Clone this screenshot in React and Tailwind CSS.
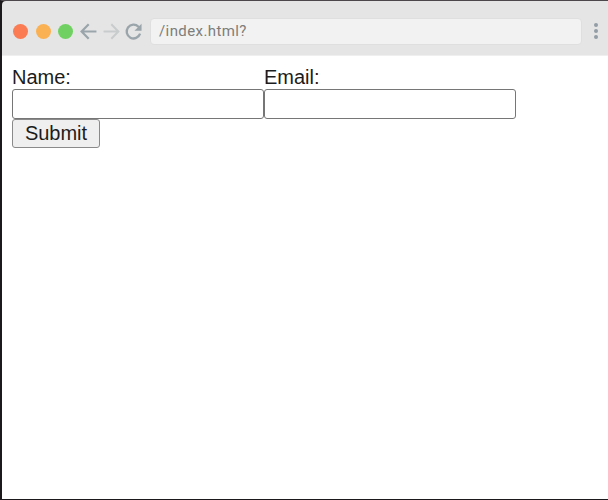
function NavIcon({ className, width, children }) {
  return (
    <svg viewBox="0 0 24 24" className={className} fill="none" stroke="currentColor" strokeWidth={width}>
      {children}
    </svg>
  );
}

function Toolbar() {
  return (
    <header className="flex h-[55px] shrink-0 items-center rounded-tl-[4px] border-b border-[#efefef] bg-[#e5e5e5] pt-[6px] pl-[11px]">
      <div className="flex shrink-0 gap-[7.5px]">
        <span className="size-[15px] rounded-full bg-[#fb7b53]" />
        <span className="size-[15px] rounded-full bg-[#fab153]" />
        <span className="size-[15px] rounded-full bg-[#70d162]" />
      </div>
      <nav className="ml-[4px] flex shrink-0 text-[#9aa5ab]">
        <NavIcon className="size-[23px]" width="2.3">
          <path d="M20.3 12H5.2M12.2 4.4 4.8 12l7.4 7.6" />
        </NavIcon>
        <NavIcon className="size-[23px] text-[#c8cccd]" width="2.1">
          <path d="M3.7 12h15.1M11.8 4.4l7.4 7.6-7.4 7.6" />
        </NavIcon>
        <NavIcon className="-ml-px size-[23px]" width="2.4">
          <path d="M18.9 14.3A7.2 7.2 0 1 1 17.2 7l1.4 1.5" />
          <path d="M20.4 3.8v7.4H13z" fill="currentColor" stroke="none" />
        </NavIcon>
      </nav>
      <div className="ml-[5px] flex h-[27px] w-[432px] shrink-0 items-center rounded-[4px] border border-[#dfdfdf] bg-[#f2f2f2] pl-[8px] font-[Roboto,sans-serif] text-[15px] tracking-[0.4px] text-[#7d7d7a]">
        /index.html?
      </div>
      <div className="ml-[12px] flex shrink-0 flex-col gap-[2px]">
        <span className="size-[4px] rounded-full bg-[#929da5]" />
        <span className="size-[4px] rounded-full bg-[#929da5]" />
        <span className="size-[4px] rounded-full bg-[#929da5]" />
      </div>
    </header>
  );
}

function Field({ label }) {
  return (
    <label className="block w-[252px]">
      <span className="block h-[24px] leading-[24px]">{label}</span>
      <input className="block h-[30px] w-full rounded-[3px] border border-[#767676] bg-white px-1 outline-none" />
    </label>
  );
}

export default function App() {
  return (
    <div className="flex h-[500px] w-[608px] flex-col overflow-hidden border-t border-b border-l-2 border-t-[#4b474a] border-b-[#1b191c] border-l-[#1b191c] bg-[#1b191c] font-['Liberation_Sans',Arial,sans-serif] text-[20px] text-[#1c1c1c]">
      <Toolbar />
      <main className="flex-1 bg-white pt-[9px] pl-[10px]">
        <form>
          <div className="flex">
            <Field label="Name:" />
            <Field label="Email:" />
          </div>
          <button type="button" className="block h-[29px] w-[88px] rounded-[3px] border border-[#8a8a8a] bg-[#efefef] leading-[25px]">
            Submit
          </button>
        </form>
      </main>
    </div>
  );
}
